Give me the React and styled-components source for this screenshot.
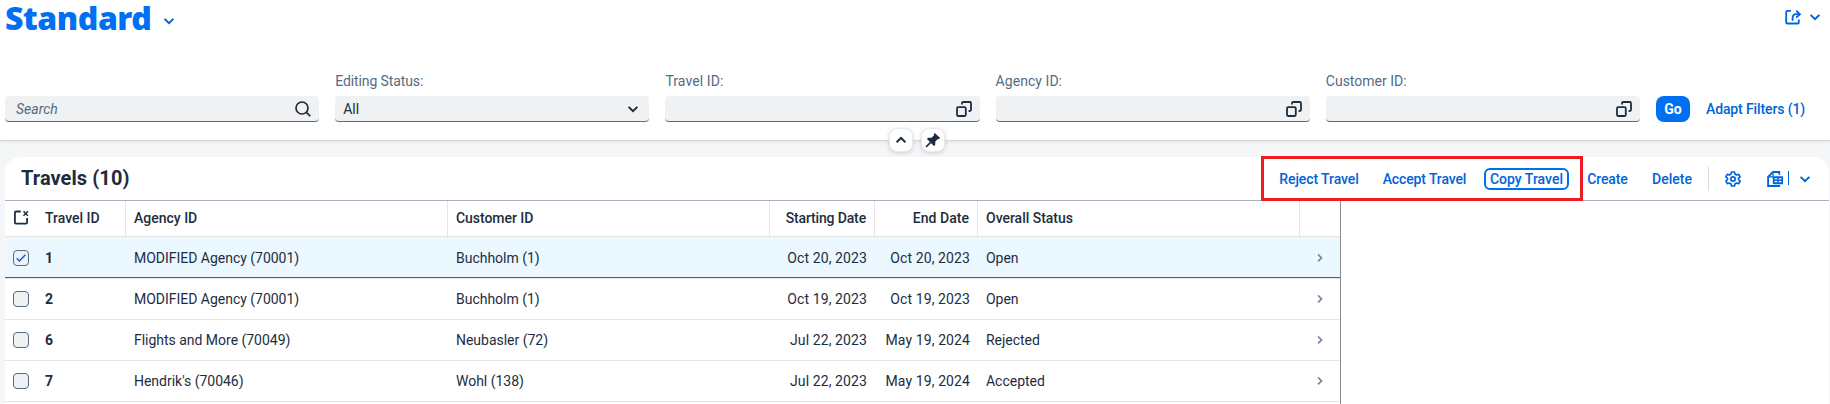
import styled, { createGlobalStyle } from "styled-components";

const filters = [
  { label: "Editing Status:", value: "All", icon: "select", track: -0.1 },
  { label: "Travel ID:", icon: "help", track: 0.08 },
  { label: "Agency ID:", icon: "help", track: 0.05 },
  { label: "Customer ID:", icon: "help", track: 0 },
];

const actions = [
  { text: "Reject Travel", width: 100, track: -0.08 },
  { text: "Accept Travel", width: 103, track: -0.12 },
  { text: "Copy Travel", width: 93, track: 0 },
  { text: "Create", width: 61, track: -0.1 },
  { text: "Delete", width: 60, track: 0 },
];

const columns = [
  { title: "Travel ID", track: 0 },
  { title: "Agency ID", track: 0 },
  { title: "Customer ID", track: -0.05 },
  { title: "Starting Date", right: true, track: -0.15 },
  { title: "End Date", right: true, track: 0.05 },
  { title: "Overall Status", track: -0.02 },
];

const travels = [
  {
    id: "1",
    agency: "MODIFIED Agency (70001)",
    customer: "Buchholm (1)",
    start: "Oct 20, 2023",
    end: "Oct 20, 2023",
    status: "Open",
    selected: true,
  },
  {
    id: "2",
    agency: "MODIFIED Agency (70001)",
    customer: "Buchholm (1)",
    start: "Oct 19, 2023",
    end: "Oct 19, 2023",
    status: "Open",
  },
  {
    id: "6",
    agency: "Flights and More (70049)",
    customer: "Neubasler (72)",
    start: "Jul 22, 2023",
    end: "May 19, 2024",
    status: "Rejected",
  },
  {
    id: "7",
    agency: "Hendrik's (70046)",
    customer: "Wohl (138)",
    start: "Jul 22, 2023",
    end: "May 19, 2024",
    status: "Accepted",
  },
];

function Chevron({ up }) {
  return (
    <Icon viewBox="0 0 16 16" $width={2}>
      <path d={up ? "M3.6 10.3 8 6l4.4 4.3" : "M3.6 5.9 8 10.2l4.4-4.3"} />
    </Icon>
  );
}

function SearchIcon() {
  return (
    <Icon viewBox="0 0 16 16" $width={1.7}>
      <circle cx="7" cy="7" r="6" />
      <path d="m11.3 11.3 3.9 3.9" />
    </Icon>
  );
}

function ValueHelpIcon() {
  return (
    <Icon viewBox="0 0 16 16" $width={1.8}>
      <rect x="1" y="6.2" width="8.8" height="8.8" rx="1.2" />
      <path d="M6 3.6V2.2Q6 1 7.2 1h6.6Q15 1 15 2.2v6.6Q15 10 13.8 10h-1.2" />
    </Icon>
  );
}

function PinIcon() {
  return (
    <Icon viewBox="0 0 16 16" $width={1.7}>
      <path
        fill="currentColor"
        stroke="none"
        d="M9.8.9 15.1 6.1 13.9 7.2 12.9 7 10.3 9.6 10.2 13 9 14 2 7l1-1.2 3.6-.1L9.2 3.1 8.8 2z"
      />
      <path d="M5.6 10.4 1 15" />
    </Icon>
  );
}

function ShareIcon() {
  return (
    <Icon viewBox="0 0 16 16" $width={1.8}>
      <path d="M6 1.9H2.2q-1 0-1 1v10.6q0 1 1 1h10.6q1 0 1-1v-3" />
      <path d="M7.6 11.8V9.2q0-4 3.6-4h3" />
      <path d="m11.2 1.7 3.7 3.5-3.7 3.5" />
    </Icon>
  );
}

function SettingsIcon() {
  return (
    <Icon viewBox="0 0 16 16" $width={1.7}>
      <path
        strokeLinejoin="round"
        d="M6.6 1h2.8l.6 2.1 1.5.9 2.2-.6 1.4 2.5-1.6 1.4v1.4l1.6 1.4-1.4 2.5-2.2-.6-1.5.9-.6 2.1H6.6L6 12.9 4.5 12l-2.2.6L.9 10.100l1.6-1.4V7.300L.9 5.900l1.4-2.500 2.200.6L6 3.100z"
      />
      <circle cx="8" cy="8" r="2.2" />
    </Icon>
  );
}

function ExportIcon() {
  return (
    <Icon viewBox="0 0 16 16" $width={1.8}>
      <path d="M12.3 3.8V1H6L1.1 5.9V15h12" />
      <path d="M6 1v3.6q0 1.300-1.300 1.300H1.1" strokeWidth="1.2" />
      <rect x="5.8" y="5.200" width="10.200" height="8" rx="0.8" fill="currentColor" stroke="none" />
      <path d="M7.600 7.900h2.600M11.700 7.900h2.600M7.600 10.600h2.600M11.700 10.600h2.600" stroke="#fff" strokeWidth="1.2" />
    </Icon>
  );
}

function ClearAllIcon() {
  return (
    <Icon viewBox="0 0 16 16" $width={1.8}>
      <path d="M7.8 1.5H3q-1.100 0-1.100 1.100v10q0 1.100 1.100 1.100h10q1.100 0 1.100-1.100V8" />
      <path d="m10.5 1.300 4.400 4.400m0-4.400-4.400 4.400" strokeWidth="1.5" />
    </Icon>
  );
}

export default function App() {
  return (
    <Page>
      <GlobalStyle />
      <PageHeader>
        <TitleRow>
          <VariantTitle>
            <span>Standard</span>
            <Chevron />
          </VariantTitle>
          <ShareMenu>
            <ShareIcon />
            <Chevron />
          </ShareMenu>
        </TitleRow>

        <FilterBar>
          <FilterFields>
            <Field>
              <Input $search>
                <Placeholder>Search</Placeholder>
                <SearchIcon />
              </Input>
            </Field>
            {filters.map((filter) => (
              <Field key={filter.label}>
                <Label $track={filter.track}>{filter.label}</Label>
                <Input>
                  <span>{filter.value}</span>
                  {filter.icon === "select" ? <Chevron /> : <ValueHelpIcon />}
                </Input>
              </Field>
            ))}
          </FilterFields>
          <GoButton>Go</GoButton>
          <AdaptButton>Adapt Filters (1)</AdaptButton>
        </FilterBar>

        <HeaderToggles>
          <ToggleButton>
            <Chevron up />
          </ToggleButton>
          <ToggleButton>
            <PinIcon />
          </ToggleButton>
        </HeaderToggles>
      </PageHeader>

      <Panel>
        <Toolbar>
          <TableTitle>Travels (10)</TableTitle>
          {actions.map((action) => (
            <ActionButton key={action.text} $width={action.width} $track={action.track}>
              {action.text === "Copy Travel" ? (
                <FocusRing>{action.text}</FocusRing>
              ) : (
                action.text
              )}
            </ActionButton>
          ))}
          <Separator />
          <IconButton $left={16}>
            <SettingsIcon />
          </IconButton>
          <IconButton $left={26}>
            <ExportIcon />
          </IconButton>
          <SplitLine />
          <IconButton $left={8}>
            <Chevron />
          </IconButton>
          <Highlight />
        </Toolbar>

        <Table>
          <HeaderRow>
            <SelectCell $header>
              <ClearAllIcon />
            </SelectCell>
            {columns.map((column) => (
              <HeaderCell key={column.title} $right={column.right} $track={column.track}>
                {column.title}
              </HeaderCell>
            ))}
          </HeaderRow>
          {travels.map((travel) => (
            <Row key={travel.id} $selected={travel.selected}>
              <SelectCell>
                <Checkbox>
                  {travel.selected && (
                    <Icon viewBox="0 0 16 16" $width={1.4}>
                      <path d="m3.7 8.3 2.7 2.8 6-6.4" />
                    </Icon>
                  )}
                </Checkbox>
              </SelectCell>
              <Cell $bold>{travel.id}</Cell>
              <Cell>{travel.agency}</Cell>
              <Cell>{travel.customer}</Cell>
              <Cell $right>{travel.start}</Cell>
              <Cell $right>{travel.end}</Cell>
              <Cell>{travel.status}</Cell>
              <NavCell>
                <Icon viewBox="0 0 16 16" $width={1.7}>
                  <path d="m6 4.4 3.6 3.5L6 11.4" />
                </Icon>
              </NavCell>
            </Row>
          ))}
        </Table>
      </Panel>
    </Page>
  );
}

const GlobalStyle = createGlobalStyle`
  * {
    box-sizing: border-box;
  }
  body {
    margin: 0;
    overflow: hidden;
    background: #f5f6f7;
    color: #1d2d3e;
    font-family: Roboto, "Liberation Sans", sans-serif;
    font-size: 14px;
  }
  button {
    padding: 0;
    border: none;
    background: none;
    font: inherit;
    cursor: pointer;
  }
`;

const Icon = styled.svg`
  flex: none;
  width: 16px;
  height: 16px;
  fill: none;
  stroke: currentColor;
  stroke-width: ${({ $width }) => $width}px;
`;

const Page = styled.div`
  display: flex;
  flex-direction: column;
  height: 404px;
  overflow: hidden;
`;

const PageHeader = styled.header`
  position: relative;
  display: flex;
  flex-direction: column;
  justify-content: space-between;
  height: 141px;
  padding: 0 0 18px 5px;
  background: #fff;
  border-bottom: 1px solid #d9d9d9;
  box-shadow: 0 1px 3px rgba(34, 53, 72, 0.1);
`;

const TitleRow = styled.div`
  display: flex;
  align-items: flex-start;
  justify-content: space-between;
  height: 40px;
`;

const VariantTitle = styled.h1`
  display: flex;
  align-items: flex-start;
  gap: 10px;
  margin: 0;
  color: #0070f2;
  font-family: "Noto Sans", sans-serif;
  font-size: 32px;
  font-weight: 900;
  line-height: 36px;
  letter-spacing: -0.45px;
  svg {
    margin-top: 13px;
    color: #0064d9;
  }
`;

const ShareMenu = styled.div`
  display: flex;
  align-items: center;
  gap: 6px;
  height: 34px;
  padding-right: 7px;
  color: #0064d9;
`;

const FilterBar = styled.div`
  display: flex;
  align-items: flex-end;
`;

const FilterFields = styled.div`
  display: grid;
  grid-template-columns: repeat(5, 1fr);
  align-items: end;
  gap: 16px;
  width: 1635px;
`;

const Field = styled.div`
  display: flex;
  flex-direction: column;
  gap: 6px;
`;

const Label = styled.label`
  line-height: 18px;
  color: #556b82;
  letter-spacing: ${({ $track }) => $track}px;
`;

const Input = styled.div`
  display: flex;
  align-items: center;
  justify-content: space-between;
  height: 26px;
  padding: 0 8px 0 ${({ $search }) => ($search ? 11 : 8)}px;
  background: #eff1f2;
  border-bottom: 1px solid #556b82;
  border-radius: 4px;
`;

const Placeholder = styled.span`
  color: #556b82;
  font-style: italic;
`;

const GoButton = styled.button`
  width: 34px;
  height: 26px;
  margin-left: 16px;
  background: #0070f2;
  border-radius: 8px;
  color: #fff;
  font-weight: 700;
`;

const AdaptButton = styled.button`
  height: 26px;
  margin-left: 16px;
  color: #0064d9;
  font-weight: 500;
  letter-spacing: -0.12px;
`;

const HeaderToggles = styled.div`
  position: absolute;
  bottom: -12px;
  left: 889px;
  display: flex;
  gap: 8px;
`;

const ToggleButton = styled.button`
  display: flex;
  align-items: center;
  justify-content: center;
  width: 24px;
  height: 24px;
  background: #fff;
  border: 1px solid #e8eaec;
  border-radius: 8px;
  box-shadow: 0 1px 4px rgba(34, 53, 72, 0.2);
  color: #1d2d3e;
`;

const Panel = styled.section`
  flex: 1;
  margin: 16px 1px 0 5px;
  background: #fff;
  border-radius: 16px 16px 0 0;
`;

const Toolbar = styled.div`
  position: relative;
  display: flex;
  align-items: center;
  height: 44px;
  padding: 0 16px;
  border-bottom: 1px solid #a8b3bf;
`;

const TableTitle = styled.h2`
  flex: 1;
  margin: 0;
  padding-bottom: 2px;
  font-size: 20px;
  font-weight: 700;
  letter-spacing: 0.08px;
`;

const ActionButton = styled.button`
  display: flex;
  align-items: center;
  justify-content: center;
  width: ${({ $width }) => $width}px;
  height: 26px;
  margin-right: 4px;
  color: #0064d9;
  font-weight: 500;
  letter-spacing: ${({ $track }) => $track}px;
  white-space: nowrap;
`;

const FocusRing = styled.span`
  height: 22px;
  padding: 0 4px;
  border: 2px solid #0070f2;
  border-radius: 6px;
  line-height: 18px;
`;

const Separator = styled.div`
  width: 1px;
  height: 24px;
  margin-left: 2px;
  background: #d9d9d9;
`;

const IconButton = styled.button`
  display: flex;
  margin-left: ${({ $left }) => $left}px;
  color: #0064d9;
`;

const SplitLine = styled.div`
  width: 1px;
  height: 14px;
  margin: -2px 0 0 5px;
  background: #0064d9;
`;

// red frame around the custom actions
const Highlight = styled.div`
  position: absolute;
  top: -1px;
  left: 1256px;
  width: 322px;
  height: 45px;
  border: 3px solid #ed1c24;
  pointer-events: none;
`;

const Table = styled.div`
  width: 1336px;
  height: 203px;
  border-right: 1px solid #8b8b8b;
`;

const HeaderRow = styled.div`
  display: grid;
  grid-template-columns: 32px 89px 322px 322px 105px 103px 322px 40px;
  height: 36px;
  border-bottom: 1px solid #e5e5e5;
`;

const HeaderCell = styled.div`
  display: flex;
  align-items: center;
  justify-content: ${({ $right }) => ($right ? "flex-end" : "flex-start")};
  padding: 0 8px 2px;
  border-right: 1px solid #e5e5e5;
  font-weight: 500;
  letter-spacing: ${({ $track }) => $track}px;
`;

const Row = styled(HeaderRow)`
  align-items: center;
  height: ${({ $selected }) => ($selected ? 42 : 41)}px;
  padding-top: ${({ $selected }) => ($selected ? 1 : 0)}px;
  background: ${({ $selected }) => ($selected ? "#ebf8ff" : "#fff")};
  box-shadow: ${({ $selected }) => ($selected ? "inset 0 -1px #0070f2" : "none")};
`;

const SelectCell = styled.div`
  display: flex;
  align-items: center;
  padding: 0 0 ${({ $header }) => ($header ? 2 : 0)}px 8px;
`;

const Cell = styled.div`
  padding: 0 8px;
  font-weight: ${({ $bold }) => ($bold ? 700 : 400)};
  text-align: ${({ $right }) => ($right ? "right" : "left")};
  letter-spacing: ${({ $right }) => ($right ? "0.1px" : "-0.02px")};
`;

const NavCell = styled.div`
  display: flex;
  justify-content: center;
  color: #758ca4;
`;

const Checkbox = styled.div`
  display: flex;
  align-items: center;
  justify-content: center;
  width: 16px;
  height: 16px;
  background: #eff1f2;
  border: 1px solid #556b82;
  border-radius: 4px;
  color: #0064d9;
`;
